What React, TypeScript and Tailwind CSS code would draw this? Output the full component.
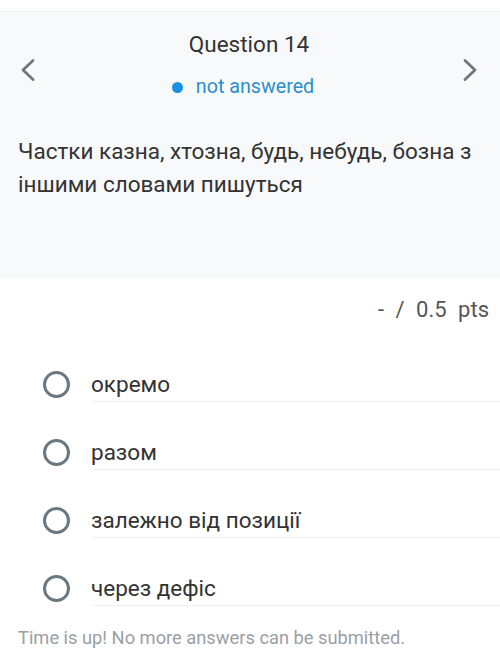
const options = ["окремо", "разом", "залежно від позиції", "через дефіс"];

function Chevron({ dir }: { dir: "left" | "right" }) {
  return (
    <svg width="17" height="24" viewBox="0 0 17 24" className="mt-[27px] text-[#6b7880]">
      <polyline
        points={dir === "left" ? "14,2.5 4,12 14,21.5" : "3,2.5 13,12 3,21.5"}
        fill="none"
        stroke="currentColor"
        strokeWidth="2.8"
        strokeLinecap="round"
        strokeLinejoin="round"
      />
    </svg>
  );
}

export default function App() {
  return (
    <div className="min-h-[671px] w-[500px] overflow-hidden bg-white font-['Roboto',sans-serif]">
      <div className="h-[12px] border-b border-[#eceef0] bg-white" />

      <div className="h-[266px] bg-[#f8f9fb]">
        <div className="flex items-start justify-between pl-[19px] pr-[21px] pt-[19px]">
          <Chevron dir="left" />
          <div className="flex flex-col items-center">
            <div className="text-[22.5px] leading-[26px] text-[#333]">Question 14</div>
            <div className="mr-[12px] mt-[19px] flex items-center gap-[13px]">
              <span className="h-[11px] w-[11px] rounded-full bg-[#1a8fe3]" />
              <span className="text-[19.7px] leading-[22px] text-[#2a8fcc]">not answered</span>
            </div>
          </div>
          <Chevron dir="right" />
        </div>
        <p className="mt-[37px] px-[18px] text-[22.5px] leading-[33px] text-[#333]">
          Частки казна, хтозна, будь, небудь, бозна з іншими словами пишуться
        </p>
      </div>

      <div className="mt-[20px] pr-[11px] text-right text-[22px] leading-[24px] text-[#555] [word-spacing:6px]">
        - / 0.5 pts
      </div>

      <div className="mt-[12px] flex flex-col">
        {options.map((o) => (
          <div key={o} className="flex h-[68px] items-end pl-[43px]">
            <span className="mb-[4px] h-[27px] w-[27px] shrink-0 rounded-full border-[3px] border-[#6b7880]" />
            <div className="ml-[21px] flex h-full flex-1 items-end border-b border-[#eef0f2] pb-[5px] text-[22.5px] leading-[24px] text-[#333]">
              {o}
            </div>
          </div>
        ))}
      </div>

      <div className="mt-[22px] px-[18px] text-[18.3px] leading-[20px] text-[#9aa0a6]">
        Time is up! No more answers can be submitted.
      </div>
    </div>
  );
}
